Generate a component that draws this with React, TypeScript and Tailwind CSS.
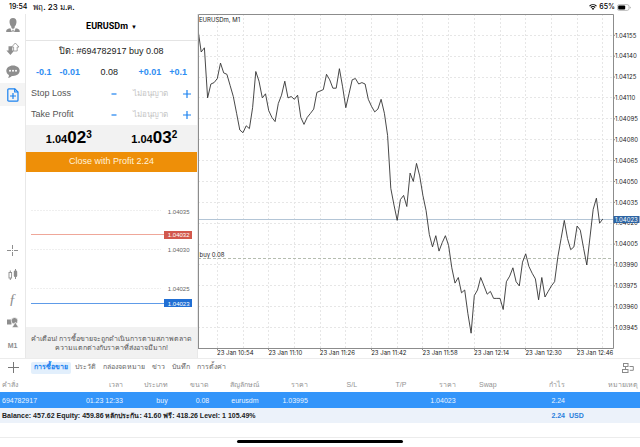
import { useState } from 'react';
import type { ReactNode } from 'react';
import clsx from 'clsx';

// close prices of the M1 bars, in points above 1.04000
const BARS = [
  159, 143, 146, 110, 120, 121, 124, 135, 128, 127, 119, 111, 99, 87, 85, 90, 88, 103, 129, 122, 110, 113,
  101, 96, 93, 106, 112, 122, 110, 111, 109, 112, 96, 91, 96, 99, 102, 114, 115, 116, 127, 123, 117, 117,
  131, 118, 103, 113, 123, 124, 120, 121, 120, 109, 104, 100, 102, 109, 99, 83, 45, 33, 22, 37, 40, 32, 56,
  50, 63, 54, 40, 29, 12, 3, 11, 0, 6, 11, 4, -12, -23, -19, -30, -28, -45, -59, -32, -28, -19, -25, -31,
  -29, -34, -34, -34, -42, -22, -18, -12, -22, -25, -8, -2, -11, -16, -20, -35, -19, -33, -29, -25, -22, -4,
  9, 22, 9, 1, 3, 18, 15, 2, -10, 10, 30, 38, 20, 23,
];

const TIMES = ['10:54', '11:10', '11:26', '11:42', '11:58', '12:14', '12:30', '12:46'];
const LEVELS = Array.from({ length: 15 }, (_, i) => 155 - i * 15);

const barX = (i: number) => i * 3.213;
const priceY = (p: number) => 21.3 + (155 - p) * 1.392;
const formatPrice = (p: number) => (1.04 + p / 100000).toFixed(5);

const TABS = ['การซื้อขาย', 'ประวัติ', 'กล่องจดหมาย', 'ข่าว', 'บันทึก', 'การตั้งค่า'];

const COLUMNS = [
  { title: 'คำสั่ง', value: '694782917', width: 'w-[8.8%]' },
  { title: 'เวลา', value: '01.23 12:33', width: 'w-[10.4%]' },
  { title: 'ประเภท', value: 'buy', width: 'w-[7%]' },
  { title: 'ขนาด', value: '0.08', width: 'w-[6.5%]' },
  { title: 'สัญลักษณ์', value: 'eurusdm', width: 'w-[7.7%]' },
  { title: 'ราคา', value: '1.03995', width: 'w-[7.7%]' },
  { title: 'S/L', value: '', width: 'w-[7.7%]' },
  { title: 'T/P', value: '', width: 'w-[7.7%]' },
  { title: 'ราคา', value: '1.04023', width: 'w-[7.7%]' },
  { title: 'Swap', value: '', width: 'w-[6.4%]' },
  { title: 'กำไร', value: '2.24', width: 'w-[10.7%]' },
  { title: 'หมายเหตุ', value: '', width: 'w-[11.7%]' },
];

function StatusBar() {
  return (
    <header className="flex h-[14px] items-center px-[9px] text-[7px] font-medium text-black font-['Inter','Noto_Sans',sans-serif]">
      <span>19:54</span>
      <span className="ml-1.5 text-[8px]">พฤ. 23 ม.ค.</span>
      <svg className="ml-auto" width="8" height="6" viewBox="0 0 16 12">
        <path d="M1 4.2a10.4 10.4 0 0 1 14 0M3.6 7a6.6 6.6 0 0 1 8.8 0" fill="none" stroke="#000" strokeWidth="2.1" />
        <path d="M8 12 5.3 9.2a4 4 0 0 1 5.4 0z" />
      </svg>
      <span className="mx-0.5">65%</span>
      <svg width="14" height="7" viewBox="0 0 14 7">
        <rect x=".4" y=".6" width="11.6" height="5.8" rx="1.8" fill="none" stroke="#a3a3a3" strokeWidth=".7" />
        <rect x="1.2" y="1.4" width="7" height="4.2" rx="1" />
        <path d="M12.8 2.4v2.2q1-.3 1-1.1t-1-1.1" fill="#a3a3a3" />
      </svg>
    </header>
  );
}

function ToolButton({ label, active, children }: { label: string; active?: boolean; children: ReactNode }) {
  return (
    <button
      aria-label={label}
      className={clsx('flex h-[23px] w-full items-center justify-center text-[#8e8e8e]', active && 'bg-[#f4f4f4]')}
    >
      {children}
    </button>
  );
}

function Sidebar() {
  return (
    <nav className="flex w-[26px] flex-col justify-between border-r border-[#e8e8e8]">
      <div>
        <ToolButton label="บัญชี">
          <svg width="14" height="15" viewBox="0 0 14 15" fill="#8e8e8e">
            <path d="M7 0c2.3 0 3.600 1.600 3.500 3.900C10.400 6.100 9.300 8 8.600 8.700v1.200L7 11 5.400 9.900V8.700C4.700 8 3.600 6.100 3.500 3.900 3.400 1.600 4.700 0 7 0z" />
            <path d="M4.300 10.300 6 14H.2c0-2.300.6-2.900 4.100-3.700zM9.700 10.300 8 14h5.800c0-2.300-.6-2.900-4.100-3.700z" />
            <path d="m7 11.600.8.700-.4 1.700h-.8l-.4-1.700z" />
          </svg>
        </ToolButton>
        <ToolButton label="ซื้อขาย">
          <svg width="14" height="14" viewBox="0 0 14 14">
            <path d="M2.500 4.200h3.800v4.300h2L4.400 13 .4 8.500h2.100z" fill="#8e8e8e" />
            <path d="M9.300 1 13 5h-1.800v4H7.600V5H5.700z" fill="#fff" stroke="#8e8e8e" strokeWidth=".8" />
          </svg>
        </ToolButton>
        <ToolButton label="ข้อความ">
          <svg width="14" height="13" viewBox="0 0 14 13">
            <path d="M7 .5c3.800 0 6.700 2.300 6.700 5.300S10.800 11 7 11l-1.200-.1C4.900 12 3.500 12.600 2 12.700c.7-.8 1-1.600.9-2.600C1.300 9.100.3 7.600.3 5.800.3 2.800 3.200.5 7 .5z" fill="#8e8e8e" />
            <g fill="#fff">
              <circle cx="4" cy="5.800" r="1" />
              <circle cx="7" cy="5.800" r="1" />
              <circle cx="10" cy="5.800" r="1" />
            </g>
          </svg>
        </ToolButton>
        <ToolButton label="คำสั่งใหม่" active>
          <svg width="12" height="14" viewBox="0 0 12 14" fill="none" stroke="#1b82f0" strokeWidth="1.200">
            <path d="M1.800.8h6l3.200 3.200v8.200q0 1-1 1H1.800q-1 0-1-1V1.800q0-1 1-1z" />
            <path d="M7.700.8V4H11M6 5v6M3 8h6" />
          </svg>
        </ToolButton>
      </div>
      <div className="flex flex-col gap-px">
        <ToolButton label="กากบาท">
          <svg width="11" height="11" viewBox="0 0 11 11" stroke="#8e8e8e" strokeWidth="1">
            <path d="M5.500 0v4M5.500 7v4M0 5.500h4M7 5.500h4M5 5.500h1" />
          </svg>
        </ToolButton>
        <ToolButton label="แท่งเทียน">
          <svg width="10" height="12" viewBox="0 0 10 12">
            <path d="M2.300 1.500V11" stroke="#8e8e8e" />
            <rect x="1" y="3.500" width="2.600" height="5.500" fill="#fff" stroke="#8e8e8e" strokeWidth=".9" />
            <path d="M7.500 0v10" stroke="#8e8e8e" />
            <rect x="5.800" y="1.500" width="3.400" height="6.500" rx="1.200" fill="#8e8e8e" />
          </svg>
        </ToolButton>
        <ToolButton label="อินดิเคเตอร์">
          <span className="text-[15px] leading-3 italic font-['Liberation_Serif',serif]">ƒ</span>
        </ToolButton>
        <ToolButton label="วัตถุ">
          <svg width="12" height="11" viewBox="0 0 12 11" fill="#8e8e8e">
            <path d="M0 2.500h4.500v5H0z" />
            <circle cx="7.500" cy="3.800" r="3.300" stroke="#fff" strokeWidth=".7" />
            <path d="M8.300 5.200 11.600 10.600H5z" stroke="#fff" strokeWidth=".6" />
          </svg>
        </ToolButton>
        <ToolButton label="กรอบเวลา M1">
          <span className="text-[7px] font-bold">M1</span>
        </ToolButton>
      </div>
    </nav>
  );
}

function StopField({ id, label }: { id: string; label: string }) {
  return (
    <div className="flex h-[21px] items-center pr-1.5 pl-[5px] text-[9px] text-[#555]">
      <label htmlFor={id} className="flex-1">
        {label}
      </label>
      <button aria-label={`${label} -`} className="w-2 text-[#1b82f0]">
        <svg width="8" height="8" viewBox="0 0 8 8">
          <path d="M1.500 4h5" stroke="currentColor" strokeWidth="1.200" />
        </svg>
      </button>
      <input
        id={id}
        placeholder="ไม่อนุญาต"
        className="h-4 w-[65px] text-center text-[8px] outline-none placeholder:text-[#c4c4c4]"
      />
      <button aria-label={`${label} +`} className="w-2 text-[#1b82f0]">
        <svg width="8" height="8" viewBox="0 0 8 8">
          <path d="M0 4h8M4 0v8" stroke="currentColor" strokeWidth="1.200" />
        </svg>
      </button>
    </div>
  );
}

function Quote({ pips, point }: { pips: string; point: string }) {
  return (
    <div className="flex flex-1 items-baseline justify-center text-[11px] leading-5 font-bold text-black">
      <span>1.04</span>
      <span className="text-[17px]">{pips}</span>
      <sup className="text-[10px]">{point}</sup>
    </div>
  );
}

function TickChart() {
  return (
    <svg viewBox="0 0 171 155" className="w-full font-['Liberation_Sans',sans-serif] text-[6px]">
      <g stroke="#efefef" strokeWidth="1" strokeDasharray="2 1">
        <path d="M5 38.500h130M5 77.500h130M5 116.500h130" />
      </g>
      <path d="M5 62.500h134" stroke="#efa799" />
      <path d="M5 131.500h134" stroke="#5e9be8" />
      <rect x="138" y="59" width="28" height="8" fill="#d2584c" />
      <rect x="138" y="127" width="28" height="8" fill="#216fd4" />
      <g fill="#666" textAnchor="end">
        <text x="163.500" y="41.500">1.04035</text>
        <text x="163.500" y="80">1.04030</text>
        <text x="163.500" y="118.500">1.04025</text>
      </g>
      <g fill="#fff" textAnchor="end">
        <text x="163.500" y="65">1.04032</text>
        <text x="163.500" y="133.500">1.04023</text>
      </g>
    </svg>
  );
}

function OrderPanel() {
  return (
    <section className="flex w-[172px] flex-col border-r border-[#e8e8e8]">
      <div className="flex h-[27px] items-center justify-center gap-[3px] border-b border-[#e4e4e4] text-black">
        <select
          aria-label="สัญลักษณ์"
          className="field-sizing-content appearance-none text-[9px] font-bold outline-none font-['Roboto',sans-serif]"
        >
          <option>EURUSDm</option>
        </select>
        <span className="text-[6px]">▼</span>
      </div>

      <h1 className="h-[21px] text-center text-[9px] leading-[21px] text-[#222]">ปิด: #694782917 buy 0.08</h1>

      <div className="flex h-[21px] items-center justify-between px-2.5 text-[9px] font-bold text-[#2f8df2]">
        <div className="flex gap-2">
          <button>-0.1</button>
          <button>-0.01</button>
        </div>
        <input aria-label="ขนาด" defaultValue="0.08" className="w-8 text-center font-normal text-[#222] outline-none" />
        <div className="flex gap-2">
          <button>+0.01</button>
          <button>+0.1</button>
        </div>
      </div>

      <StopField id="stop-loss" label="Stop Loss" />
      <StopField id="take-profit" label="Take Profit" />

      <div className="flex h-[27px] items-center bg-[#f2f2f2]">
        <Quote pips="02" point="3" />
        <Quote pips="03" point="2" />
      </div>
      <button className="h-5 bg-[#ee8f08] text-[9px] text-[#fff3dc]">Close with Profit 2.24</button>

      <TickChart />

      <p className="flex-1 bg-[#f1f1f1] px-1 pt-[7px] text-center text-[7px] leading-[9px] text-[#555]">
        คำเตือน! การซื้อขายจะถูกดำเนินการตามสภาพตลาด
        <br />
        ความแตกต่างกับราคาที่ส่งอาจมีมาก!
      </p>
    </section>
  );
}

function PriceChart() {
  const line = BARS.map((p, i) => `${barX(i).toFixed(1)},${priceY(p).toFixed(1)}`).join(' ');

  return (
    <svg viewBox="0 0 442 344" className="w-full font-['Inter',sans-serif] text-[6px]">
      {/* grid */}
      <g stroke="#e6e6e6" strokeDasharray="2 2">
        {LEVELS.map((p) => (
          <line key={p} x1="0" x2="415" y1={Math.floor(priceY(p)) + 0.5} y2={Math.floor(priceY(p)) + 0.5} />
        ))}
        {Array.from({ length: 16 }, (_, i) => (
          <line key={i} y1="0" y2="334" x1={Math.floor(19.3 + i * 25.7) + 0.5} x2={Math.floor(19.3 + i * 25.7) + 0.5} />
        ))}
      </g>

      {/* bid and open position */}
      <path d="M0 205.500h415" stroke="#b3c5d6" />
      <path d="M0 244.500h415" stroke="#b5bdb0" strokeDasharray="3 2" />
      <text x="1.500" y="242.500" fill="#222">buy 0.08</text>

      <polyline points={line} fill="none" stroke="#333" strokeWidth=".9" strokeLinejoin="round" />
      <path d="M.5 334V.5h415v334H0" fill="none" stroke="#8c8c8c" />
      <text x="1" y="7.500" fill="#222">EURUSDm, M1</text>

      {/* price axis */}
      <g fill="#222">
        {LEVELS.map((p) => (
          <g key={p}>
            <line x1="415" x2="417" y1={priceY(p)} y2={priceY(p)} stroke="#8c8c8c" />
            <text x="417" y={priceY(p) + 2.2}>
              {formatPrice(p)}
            </text>
          </g>
        ))}
      </g>
      <rect x="415.500" y="202" width="26" height="7" fill="#2c64a3" />
      <text x="417" y="207.500" fill="#fff">1.04023</text>

      {/* time axis */}
      {TIMES.map((t, i) => (
        <g key={t} fill="#222">
          <path d={`M${Math.floor(19.3 + i * 51.4) + 0.5} 334v2`} stroke="#8c8c8c" />
          <text x={19 + i * 51.4} y="341">
            23 Jan {t}
          </text>
        </g>
      ))}
    </svg>
  );
}

function TradeTable() {
  return (
    <table className="w-full table-fixed text-right text-[7px] leading-none">
      <thead>
        <tr className="h-4 text-[#929292]">
          {COLUMNS.map((c, i) => (
            <th key={i} className={clsx('p-0 font-normal whitespace-nowrap', c.width, i === 0 && 'pl-0.5 text-left', i === 11 && 'pr-0.5')}>
              {c.title}
            </th>
          ))}
        </tr>
      </thead>
      <tbody>
        <tr className="h-4 bg-[#3395fa] text-[#eaf4ff]">
          {COLUMNS.map((c, i) => (
            <td key={i} className={clsx('p-0 whitespace-nowrap', i === 0 && 'pl-0.5 text-left')}>
              {c.value}
            </td>
          ))}
        </tr>
      </tbody>
      <tfoot>
        <tr className="h-[15px] bg-[#ecf2fa] font-bold text-[#222]">
          <td colSpan={10} className="p-0 pl-0.5 text-left">
            Balance: 457.62 Equity: 459.86 หลักประกัน: 41.60 ฟรี: 418.26 Level: 1 105.49%
          </td>
          <td className="p-0 text-[#2a80dc]">2.24</td>
          <td className="p-0 pl-1 text-left text-[#2a80dc]">USD</td>
        </tr>
      </tfoot>
    </table>
  );
}

export default function App() {
  const [tab, setTab] = useState(0);

  return (
    <div className="flex min-h-screen flex-col bg-white font-['Liberation_Sans','Noto_Sans',sans-serif]">
      <StatusBar />

      <main className="flex">
        <Sidebar />
        <OrderPanel />
        <div className="min-w-0 flex-1">
          <PriceChart />
        </div>
      </main>

      <section className="border-t border-[#ececec]">
        <div className="flex h-[17px] items-center pr-1.5 pl-2 text-[7px] text-[#666]">
          <button aria-label="เพิ่ม" className="mr-3">
            <svg width="11" height="11" viewBox="0 0 11 11" stroke="#777" className="block">
              <path d="M0 5.500h11M5.500 0v11" />
            </svg>
          </button>
          <div role="tablist" className="flex gap-px">
            {TABS.map((name, i) => (
              <button
                key={name}
                role="tab"
                aria-selected={tab === i}
                onClick={() => setTab(i)}
                className={clsx('h-3 rounded-xs px-[3px] whitespace-nowrap', tab === i && 'bg-[#e2effc] font-bold text-[#1b82f0]')}
              >
                {name}
              </button>
            ))}
          </div>
          <button aria-label="เค้าโครง" className="ml-auto">
            <svg width="12" height="10" viewBox="0 0 12 10" fill="none" stroke="#8a8a8a" className="block">
              <rect x="1.500" y=".5" width="4.500" height="3" />
              <rect x=".5" y="6.500" width="5.500" height="3" />
              <path d="M7.500 3.500h3.800v3.800H7.800M3.500 3.500v3" />
            </svg>
          </button>
        </div>
        <TradeTable />
      </section>

      <footer className="mt-auto h-[10px] border-t border-[#ececec] pt-0.5">
        <div className="mx-auto h-[3px] w-[26%] rounded-full bg-black" />
      </footer>
    </div>
  );
}
